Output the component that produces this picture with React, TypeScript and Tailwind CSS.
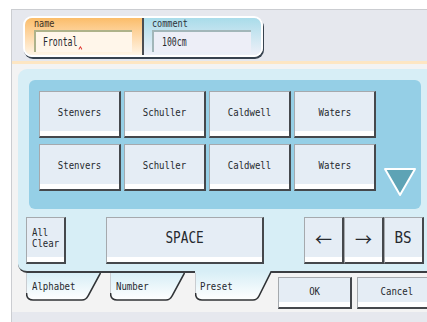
const keyStyle =
  "flex shrink-0 items-center justify-center border-t border-l border-[#a5a9ad] border-r-2 border-b-2 border-r-[#45484c] border-b-[#45484c] bg-[#e5edf5] shadow-[inset_0_-5px_0_#ffffff]";

function Key({ children, className = "" }: { children: React.ReactNode; className?: string }) {
  return <div className={`${keyStyle} ${className}`}>{children}</div>;
}

function Small({ children, className = "" }: { children: React.ReactNode; className?: string }) {
  return (
    <span className={`inline-block origin-center scale-x-[0.82] whitespace-pre text-[11px] leading-[11px] ${className}`}>
      {children}
    </span>
  );
}

function Tab({ label, id, active = false }: { label: string; id: string; active?: boolean }) {
  const w = active ? 77 : 75;
  const h = active ? 30 : 28;
  const b = h - 1;
  return (
    <div className={active ? "relative -mt-[2px] h-[30px] w-[77px] shrink-0" : "relative h-[28px] w-[75px] shrink-0"}>
      <svg className="absolute inset-0" width={w} height={h}>
        <defs>
          <linearGradient id={id} x1="0" y1="0" x2="0" y2="1">
            <stop offset="0" stopColor="#d7eef6" />
            <stop offset="1" stopColor="#ffffff" />
          </linearGradient>
        </defs>
        <path
          d={`M0 0 L${w} 0 L${w - 13} ${b - 4} Q${w - 15} ${b} ${w - 19} ${b} L7 ${b} Q0.5 ${b} 0.5 ${b - 7} Z`}
          fill={`url(#${id})`}
        />
        <path d={`M0.5 ${active ? 2 : 0} L0.5 ${b - 7}`} stroke="#c9ccd0" strokeWidth="1" fill="none" />
        <path
          d={`M0.5 ${b - 7} Q0.5 ${b} 7 ${b} L${w - 19} ${b} Q${w - 15} ${b} ${w - 13} ${b - 4} L${w - 0.5} 0`}
          stroke="#303336"
          strokeWidth="1.6"
          fill="none"
        />
      </svg>
      <div className={active ? "relative flex pl-[5px] pt-[10px]" : "relative flex pl-[6px] pt-[8px]"}>
        <Small className="origin-left">{label}</Small>
      </div>
    </div>
  );
}

export default function App() {
  const presets = ["Stenvers", "Schuller", "Caldwell", "Waters", "Stenvers", "Schuller", "Caldwell", "Waters"];

  return (
    <div className="h-[322px] w-[427px] overflow-hidden bg-white pl-[11px] pt-[9px] font-['DejaVu_Sans_Mono',monospace] text-[#25292e]">
      <div className="flex h-[313px] flex-col border-l border-t border-[#cbcdd1] bg-[#f3f3f3]">
        <header className="h-[51px] bg-[#e6e8ee] pl-[11px] pt-[6px]">
          <div className="flex h-[41px] w-[240px] overflow-hidden rounded-[9px] border-2 border-white shadow-[1px_2px_0_#37424e]">
            <div className="flex w-[117px] flex-col bg-gradient-to-b from-[#fbbd69] to-[#fff5e6] pl-[9px] pt-[1px]">
              <span className="inline-block origin-left scale-x-[0.85] text-[10px] leading-[10px] text-[#3a3024]">name</span>
              <div className="mt-[1px] flex h-[22px] w-[98px] items-center border-l-2 border-t-2 border-[#aeb28a] bg-[#fff6ea] pl-[7px]">
                <span className="inline-flex origin-left scale-x-[0.68] items-end text-[12px] leading-[12px]">
                  Frontal
                  <svg width="6" height="4" className="mb-[-2px] ml-[1px]">
                    <path d="M0.5 3.5 L3 0.8 L5.5 3.5" stroke="#e0403a" strokeWidth="1.2" fill="none" />
                  </svg>
                </span>
              </div>
            </div>
            <div className="w-[2px] bg-[#4a4d52]" />
            <div className="flex flex-1 flex-col bg-gradient-to-b from-[#a9dcea] to-[#eef0f8] pl-[8px] pt-[1px]">
              <span className="inline-block origin-left scale-x-[0.85] text-[10px] leading-[10px] text-[#2c3238]">comment</span>
              <div className="mt-[1px] flex h-[22px] w-[99px] items-center border-l-2 border-t-2 border-[#a2b6b9] bg-[#edeef7] pl-[8px]">
                <span className="inline-block origin-left scale-x-[0.68] text-[12px] leading-[12px]">100cm</span>
              </div>
            </div>
          </div>
        </header>
        <div className="h-[3px] bg-[#fde6c3]" />

        <main className="h-[248px] pl-[6px] pt-[5px]">
          <div className="flex h-[204px] flex-col rounded-l-[9px] border-b-2 border-[#3b3e42] bg-[#d7eef6] pl-[8px] pt-[11px]">
            <div className="ml-[3px] flex h-[129px] w-[392px] items-start rounded-[6px] bg-[#95cfe6] pl-[10px] pt-[11px]">
              <div className="grid grid-cols-[repeat(4,82px)] gap-x-[3px] gap-y-[6px]">
                {presets.map((p, i) => (
                  <Key key={i} className="h-[47px] pb-[3px]">
                    <Small>{p}</Small>
                  </Key>
                ))}
              </div>
              <svg width="34" height="30" className="ml-[7px] mt-[76px]">
                <polygon points="2,2 32,2 17,28" fill="#5ea3b5" stroke="#ffffff" strokeWidth="2" strokeLinejoin="round" />
              </svg>
            </div>

            <div className="mt-[8px] flex h-[47px]">
              <Key className="w-[40px] flex-col pb-[4px]">
                <Small className="leading-[10px]">{"All\nClear"}</Small>
              </Key>
              <Key className="ml-[40px] w-[158px] pb-[4px]">
                <span className="inline-block scale-x-[0.85] text-[15px] leading-[15px]">SPACE</span>
              </Key>
              <div className="ml-[40px] flex">
                <Key className="w-[40px] pb-[4px]">
                  <span className="font-['Noto_Sans_CJK_JP',sans-serif] text-[17px] leading-[17px]">←</span>
                </Key>
                <Key className="w-[40px] pb-[4px]">
                  <span className="font-['Noto_Sans_CJK_JP',sans-serif] text-[17px] leading-[17px]">→</span>
                </Key>
                <Key className="w-[40px] pb-[4px]">
                  <span className="inline-block scale-x-[0.95] text-[15px] leading-[15px]">BS</span>
                </Key>
              </div>
            </div>
          </div>

          <div className="flex h-[39px] items-start pl-[8px]">
            <Tab label="Alphabet" id="tabA" />
            <div className="ml-[9px] shrink-0">
              <Tab label="Number" id="tabB" />
            </div>
            <div className="ml-[10px] shrink-0">
              <Tab label="Preset" id="tabC" active />
            </div>
            <Key className="ml-[6px] mt-[4px] h-[32px] w-[74px] pb-[2px]">
              <Small>OK</Small>
            </Key>
            <Key className="ml-[5px] mt-[4px] h-[32px] w-[80px] pb-[2px]">
              <Small>Cancel</Small>
            </Key>
          </div>
        </main>

        <div className="h-[10px] bg-[#e6e8ee]" />
      </div>
    </div>
  );
}
